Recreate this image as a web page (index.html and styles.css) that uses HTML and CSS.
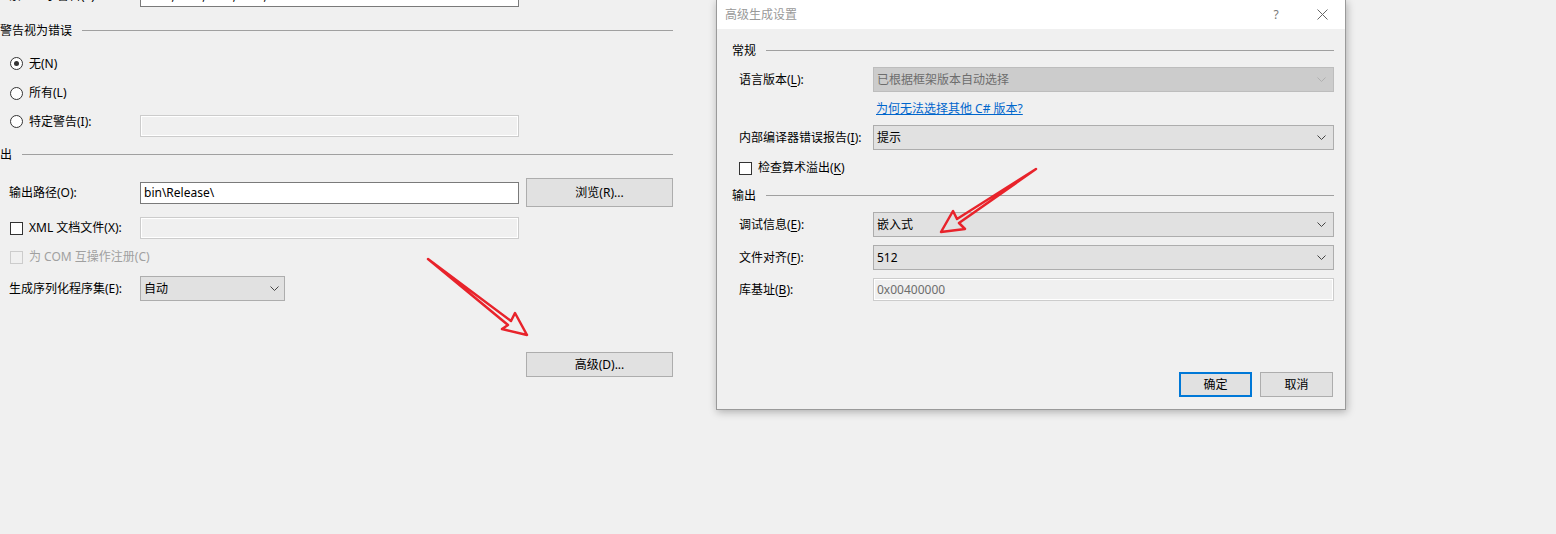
FILE: index.html
```html
<!DOCTYPE html>
<html lang="zh-CN">
<head>
<meta charset="utf-8">
<title>高级生成设置</title>
<link rel="stylesheet" href="styles.css">
</head>
<body>
<div class="screen">
  <section class="panel">
    <div class="row row-top">
      <span class="label">禁止显示警告(S):</span>
      <div class="textbox">1701;1702;1705;2008;0414</div>
    </div>

    <div class="ghead gh-warn"><span>将警告视为错误</span><i class="rule"></i></div>

    <div class="row r-none">
      <span class="opt"><span class="radio checked"></span><span>无(N)</span></span>
    </div>
    <div class="row r-all">
      <span class="opt"><span class="radio"></span><span>所有(L)</span></span>
    </div>
    <div class="row r-spec">
      <span class="opt opt-raise"><span class="radio"></span><span>特定警告(I):</span></span>
      <div class="textbox off"></div>
    </div>

    <div class="ghead gh-out"><span>输出</span><i class="rule"></i></div>

    <div class="row r-path">
      <span class="label">输出路径(O):</span>
      <div class="textbox">bin\Release\</div>
      <div class="btn btn-browse">浏览(R)...</div>
    </div>
    <div class="row r-xml">
      <span class="opt"><span class="check"></span><span>XML 文档文件(X):</span></span>
      <div class="textbox off"></div>
    </div>
    <div class="row r-com">
      <span class="opt muted"><span class="check off"></span><span>为 COM 互操作注册(C)</span></span>
    </div>
    <div class="row r-serial">
      <span class="label">生成序列化程序集(E):</span>
      <div class="select small"><span>自动</span><svg class="chev" width="9" height="5" viewBox="0 0 9 5"><polyline points="0.5,0.5 4.5,4.5 8.5,0.5"/></svg></div>
    </div>
    <div class="row r-adv">
      <div class="btn btn-adv">高级(D)...</div>
    </div>
  </section>

  <section class="dialog">
    <div class="titlebar">
      <span class="title">高级生成设置</span>
      <span class="tbtn">?</span>
      <span class="tbtn"><svg width="11" height="11" viewBox="0 0 11 11"><path d="M0.5 0.5 L10.5 10.5 M10.5 0.5 L0.5 10.5" stroke="#666" stroke-width="1" fill="none"/></svg></span>
    </div>
    <div class="dbody">
      <div class="dhead dh-gen"><span>常规</span><i class="rule"></i></div>
      <div class="drow dr-lang">
        <span class="dlabel">语言版本(<u>L</u>):</span>
        <div class="select disabled"><span>已根据框架版本自动选择</span><svg class="chev" width="9" height="5" viewBox="0 0 9 5"><polyline points="0.5,0.5 4.5,4.5 8.5,0.5"/></svg></div>
      </div>
      <div class="dlink-row"><a class="link" href="#">为何无法选择其他 C# 版本?</a></div>
      <div class="drow dr-ice">
        <span class="dlabel">内部编译器错误报告(<u>I</u>):</span>
        <div class="select"><span>提示</span><svg class="chev" width="9" height="5" viewBox="0 0 9 5"><polyline points="0.5,0.5 4.5,4.5 8.5,0.5"/></svg></div>
      </div>
      <div class="drow dr-check">
        <span class="check"></span><span class="check-text">检查算术溢出(<u>K</u>)</span>
      </div>
      <div class="dhead dh-out"><span>输出</span><i class="rule"></i></div>
      <div class="drow dr-next">
        <span class="dlabel">调试信息(<u>E</u>):</span>
        <div class="select"><span>嵌入式</span><svg class="chev" width="9" height="5" viewBox="0 0 9 5"><polyline points="0.5,0.5 4.5,4.5 8.5,0.5"/></svg></div>
      </div>
      <div class="drow dr-next">
        <span class="dlabel">文件对齐(<u>F</u>):</span>
        <div class="select"><span>512</span><svg class="chev" width="9" height="5" viewBox="0 0 9 5"><polyline points="0.5,0.5 4.5,4.5 8.5,0.5"/></svg></div>
      </div>
      <div class="drow dr-base">
        <span class="dlabel">库基址(<u>B</u>):</span>
        <div class="textbox off wide">0x00400000</div>
      </div>
      <div class="dbuttons">
        <div class="btn btn-dlg btn-default">确定</div>
        <div class="btn btn-dlg">取消</div>
      </div>
    </div>
  </section>
</div>

<svg class="marks" width="1556" height="534" viewBox="0 0 1556 534">
  <polygon points="428,259 511,321 515,313 527,335 502,329 508,325" />
  <polygon points="1036,169 957,219 953,211 941,232 965,229 959,223" />
</svg>
</body>
</html>
```

FILE: styles.css
```css
* { box-sizing: border-box; }
html, body { margin: 0; padding: 0; }
body {
  width: 1556px;
  height: 534px;
  overflow: hidden;
  position: relative;
  background: #f0f0f0;
  font-family: "Noto Sans", "Noto Sans CJK SC", sans-serif;
  font-size: 12px;
  line-height: 16px;
  color: #000;
}
u { text-decoration: underline; text-underline-offset: 2px; }

.screen { display: flex; align-items: flex-start; }

/* ---------- left property panel ---------- */
.panel { width: 673px; flex: none; display: flex; flex-direction: column; }
.row { display: flex; align-items: center; padding-left: 9px; }
.label { width: 131px; flex: none; white-space: nowrap; }
.opt { width: 131px; flex: none; display: flex; align-items: center; gap: 6px; white-space: nowrap; padding-left: 1px; }
.opt-raise { margin-top: -9px; }
.muted { color: #a0a0a0; }

.row-top { height: 22px; margin-top: -15px; }
.r-none { height: 23px; margin-top: 13px; }
.r-all { height: 22px; margin-top: 7px; }
.r-spec { height: 22px; margin-top: 11px; }
.r-path { height: 29px; margin-top: 15px; }
.r-xml { height: 22px; margin-top: 10px; }
.r-com { height: 22px; margin-top: 7px; }
.r-serial { height: 25px; margin-top: 8px; }
.r-adv { height: 25px; margin-top: 51px; justify-content: flex-end; }

.ghead { display: flex; align-items: center; height: 17px; margin-left: -12px; white-space: nowrap; }
.gh-warn { margin-top: 15px; }
.gh-out { margin-top: 9px; }
.rule { display: block; flex: 1; height: 1px; background: #a0a0a0; margin-left: 10px; }

/* ---------- controls ---------- */
.textbox {
  width: 379px; height: 22px; flex: none;
  background: #fff; border: 1px solid #7a7a7a;
  padding-left: 3px;
  display: flex; align-items: center;
  white-space: nowrap; overflow: hidden;
}
.textbox.off { background: #f0f0f0; border-color: #cccccc; box-shadow: inset 0 0 0 1px #fff; color: #6d6d6d; }
.textbox.wide { flex: 1; width: auto; height: 23px; }

.select {
  flex: 1; height: 25px;
  background: #e1e1e1; border: 1px solid #adadad;
  display: flex; align-items: center; justify-content: space-between;
  padding: 0 7px 0 3px; white-space: nowrap;
}
.select.small { flex: none; width: 145px; padding-right: 5px; }
.select.disabled { background: #cccccc; border-color: #bdbdbd; color: #6d6d6d; }
.chev { flex: none; }
.chev polyline { fill: none; stroke: #444; stroke-width: 1; }
.select.disabled .chev polyline { stroke: #b0b0b0; }

.btn {
  background: #e1e1e1; border: 1px solid #adadad;
  display: flex; align-items: center; justify-content: center;
  white-space: nowrap; flex: none;
}
.btn-browse { width: 147px; height: 29px; margin-left: 7px; }
.btn-adv { width: 147px; height: 25px; }
.btn-dlg { width: 73px; height: 25px; }
.btn-default { border: 2px solid #0078d7; }

.radio {
  width: 13px; height: 13px; flex: none;
  border: 1px solid #333; border-radius: 50%; background: #fff;
  display: flex; align-items: center; justify-content: center;
}
.radio.checked::after { content: ""; width: 5px; height: 5px; border-radius: 50%; background: #333; }
.check { width: 13px; height: 13px; flex: none; border: 1px solid #333; background: #fff; }
.check.off { border-color: #cccccc; background: #f0f0f0; }

/* ---------- dialog ---------- */
.dialog {
  flex: none;
  margin-left: 43px;
  width: 630px; height: 410px;
  background: #f0f0f0;
  border: 1px solid #9a9a9a; border-top: none;
  box-shadow: 1px 2px 8px rgba(0, 0, 0, 0.28);
  display: flex; flex-direction: column;
}
.titlebar { height: 29px; flex: none; background: #fff; display: flex; align-items: center; }
.title { flex: 1; padding-left: 8px; color: #999; }
.tbtn { width: 46px; height: 29px; display: flex; align-items: center; justify-content: center; color: #777; }

.dbody { flex: 1; display: flex; flex-direction: column; padding: 0 11px 0 15px; }
.dhead { display: flex; align-items: center; height: 17px; white-space: nowrap; }
.dh-gen { margin-top: 13px; }
.dh-out { margin-top: 11px; }
.drow { display: flex; align-items: center; height: 25px; padding-left: 7px; }
.dlabel { width: 134px; flex: none; white-space: nowrap; }
.dr-lang { margin-top: 8px; }
.dlink-row { height: 16px; margin-top: 9px; padding-left: 144px; display: flex; align-items: center; }
.link { color: #0066cc; text-decoration: underline; white-space: nowrap; }
.dr-ice { margin-top: 8px; }
.dr-check { height: 16px; margin-top: 10px; gap: 6px; }
.check-text { white-space: nowrap; }
.dr-next { margin-top: 8px; }
.dr-base { height: 23px; margin-top: 8px; }
.dbuttons { margin-top: 71px; display: flex; justify-content: flex-end; gap: 8px; padding-right: 1px; }

/* ---------- red annotation arrows ---------- */
.marks { position: absolute; left: 0; top: 0; pointer-events: none; }
.marks polygon { fill: none; stroke: #e8232b; stroke-width: 2.5; stroke-linejoin: round; }
```
